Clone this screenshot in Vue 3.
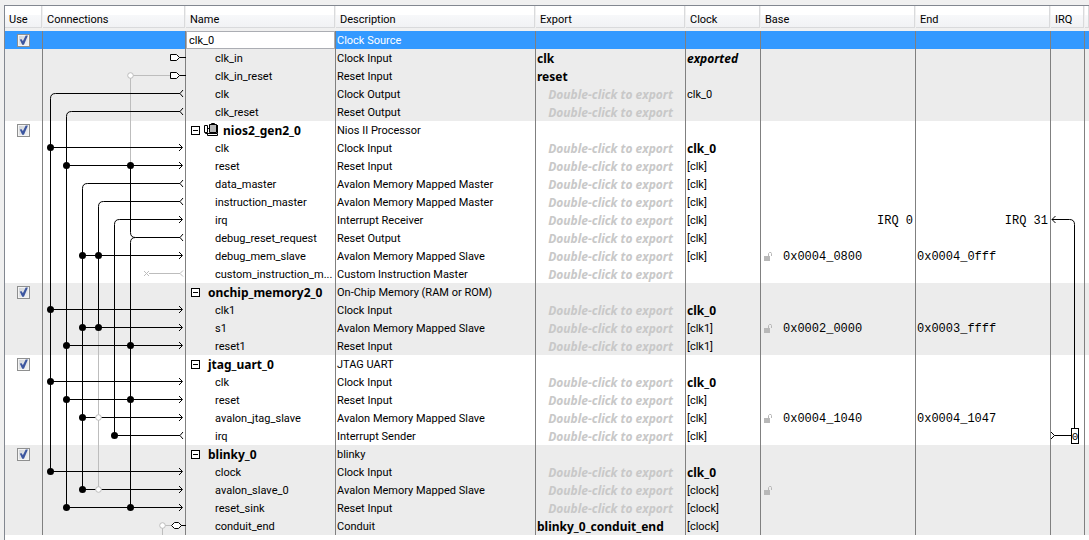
<script setup>
import { ref } from 'vue'

const ROW = 18
const EXPORT_HINT = 'Double-click to export'

const port = (name, description, clock = '', extra = {}) => ({ name, description, clock, hint: true, ...extra })

const modules = ref([
  {
    name: 'clk_0', description: 'Clock Source', enabled: true, selected: true, shaded: true,
    ports: [
      port('clk_in', 'Clock Input', 'exported', { hint: false, exported: 'clk', clockStyle: 'strong slanted' }),
      port('clk_in_reset', 'Reset Input', '', { hint: false, exported: 'reset' }),
      port('clk', 'Clock Output', 'clk_0'),
      port('clk_reset', 'Reset Output'),
    ],
  },
  {
    name: 'nios2_gen2_0', description: 'Nios II Processor', enabled: true, cpu: true,
    ports: [
      port('clk', 'Clock Input', 'clk_0', { clockStyle: 'strong' }),
      port('reset', 'Reset Input', '[clk]'),
      port('data_master', 'Avalon Memory Mapped Master', '[clk]'),
      port('instruction_master', 'Avalon Memory Mapped Master', '[clk]'),
      port('irq', 'Interrupt Receiver', '[clk]', { irqFrom: 'IRQ 0', irqTo: 'IRQ 31' }),
      port('debug_reset_request', 'Reset Output', '[clk]'),
      port('debug_mem_slave', 'Avalon Memory Mapped Slave', '[clk]', { lock: true, base: '0x0004_0800', end: '0x0004_0fff' }),
      port('custom_instruction_m...', 'Custom Instruction Master'),
    ],
  },
  {
    name: 'onchip_memory2_0', description: 'On-Chip Memory (RAM or ROM)', enabled: true, shaded: true,
    ports: [
      port('clk1', 'Clock Input', 'clk_0', { clockStyle: 'strong' }),
      port('s1', 'Avalon Memory Mapped Slave', '[clk1]', { lock: true, base: '0x0002_0000', end: '0x0003_ffff' }),
      port('reset1', 'Reset Input', '[clk1]'),
    ],
  },
  {
    name: 'jtag_uart_0', description: 'JTAG UART', enabled: true,
    ports: [
      port('clk', 'Clock Input', 'clk_0', { clockStyle: 'strong' }),
      port('reset', 'Reset Input', '[clk]'),
      port('avalon_jtag_slave', 'Avalon Memory Mapped Slave', '[clk]', { lock: true, base: '0x0004_1040', end: '0x0004_1047' }),
      port('irq', 'Interrupt Sender', '[clk]'),
    ],
  },
  {
    name: 'blinky_0', description: 'blinky', enabled: true, shaded: true,
    ports: [
      port('clock', 'Clock Input', 'clk_0', { clockStyle: 'strong' }),
      port('avalon_slave_0', 'Avalon Memory Mapped Slave', '[clock]', { lock: true }),
      port('reset_sink', 'Reset Input', '[clock]'),
      port('conduit_end', 'Conduit', '[clock]', { hint: false, exported: 'blinky_0_conduit_end' }),
    ],
  },
])

const headings = ['Use', 'Connections', 'Name', 'Description', 'Export', 'Clock', 'Base', 'End', 'IRQ', '']
const columns = ['use', 'wires', 'name', 'desc', 'export', 'clock', 'base', 'end', 'irq', 'rest']

// Wiring diagram: rows are counted from the first body row, x is inside the Connections column.
const y = (row) => row * ROW + 8.5
const lane = (n) => 7.5 + n * 16

const trunks = [
  `M137 ${y(3)}H12.5Q7.5 ${y(3)} 7.5 ${y(3) + 5}V${y(24)}`,
  `M137 ${y(4)}H28.5Q23.5 ${y(4)} 23.5 ${y(4) + 5}V${y(26)}`,
  `M137 ${y(8)}H44.5Q39.5 ${y(8)} 39.5 ${y(8) + 5}V${y(25)}`,
  `M137 ${y(9)}H60.5Q55.5 ${y(9)} 55.5 ${y(9) + 5}V${y(16)}`,
  `M139 ${y(10)}H76.5Q71.5 ${y(10)} 71.5 ${y(10) + 5}V${y(22)}H137`,
  `M87.5 ${y(7)}V${y(11) - 5}Q87.5 ${y(11)} 92.5 ${y(11)}H137M92.5 ${y(11)}Q87.5 ${y(11)} 87.5 ${y(11) + 5}V${y(26)}`,
]
const branches = [[6, 0], [7, 1], [12, 2], [15, 0], [16, 2], [17, 1], [19, 0], [20, 1], [21, 2], [24, 0], [25, 2], [26, 1]]
const arrows = [...branches.map((b) => b[0]), 10]
const forks = [3, 4, 8, 9, 11, 22]
const joints = [
  [6, 0], [7, 1], [7, 5], [12, 2], [12, 3], [15, 0], [16, 2], [16, 3], [17, 1], [17, 5], [19, 0],
  [20, 1], [20, 5], [21, 2], [22, 4], [24, 0], [25, 2], [26, 1], [26, 5],
]
const openJoints = [[2, 5], [21, 3], [25, 3], [27, 7]]
</script>

<template>
  <main class="page">
    <div class="panel">
      <table class="grid">
        <colgroup>
          <col v-for="c in columns" :key="c" :class="'w-' + c" />
        </colgroup>
        <thead>
          <tr>
            <th v-for="(h, i) in headings" :key="i" scope="col">{{ h }}</th>
          </tr>
        </thead>
        <tbody v-for="m in modules" :key="m.description" :class="{ shaded: m.shaded }">
          <tr :class="{ selected: m.selected }">
            <td class="use"><input v-model="m.enabled" class="tick" type="checkbox" :aria-label="'Use ' + m.name" /></td>
            <td></td>
            <td class="name">
              <input v-if="m.selected" v-model="m.name" class="editor" type="text" aria-label="Name" />
              <div v-else class="module">
                <button class="toggle" type="button" :aria-label="'Collapse ' + m.name"></button>
                <svg v-if="m.cpu" class="cpu" width="15" height="14" viewBox="0 0 15 14" aria-hidden="true">
                  <path d="M.5 2.5h3v7h-3zM4 5.5h1.500M1.500 9.500v1h3" fill="none" stroke="#000" />
                  <path d="M5.500 1.500h7v8h-7z" fill="#b5b5b5" stroke="#000" />
                  <path d="M7.500 1.500v-1h3v1M13.500 2v8M3.500 10.500h10v2h-10z" fill="none" stroke="#000" />
                </svg>
                <strong>{{ m.name }}</strong>
              </div>
            </td>
            <td>{{ m.description }}</td>
            <td></td><td></td><td></td><td></td><td></td><td class="rest"></td>
          </tr>
          <tr v-for="p in m.ports" :key="p.name">
            <td></td>
            <td></td>
            <td class="port">{{ p.name }}</td>
            <td>{{ p.description }}</td>
            <td v-if="p.hint" class="hint">{{ EXPORT_HINT }}</td>
            <td v-else class="strong">{{ p.exported }}</td>
            <td :class="p.clockStyle">{{ p.clock }}</td>
            <td class="mono">
              <span v-if="p.irqFrom" class="right">{{ p.irqFrom }}</span>
              <span v-else-if="p.lock" class="address">
                <svg class="lock" width="9" height="9" viewBox="0 0 9 9" aria-hidden="true">
                  <path d="M0 4h6v5H0z" fill="#b8b8b8" />
                  <path d="M4.500 4V1.500L5.500 .5H7L7.500 1.500V4" fill="none" stroke="#b8b8b8" />
                </svg>
                <span class="base">{{ p.base }}</span>
              </span>
            </td>
            <td class="mono"><span v-if="p.irqTo" class="right">{{ p.irqTo }}</span><template v-else>{{ p.end }}</template></td>
            <td></td>
            <td class="rest"></td>
          </tr>
        </tbody>
      </table>

      <svg class="wiring" width="143" height="504" viewBox="0 0 143 504" fill="none" stroke="#000" aria-hidden="true">
        <g stroke="#bdbdbd">
          <path :d="`M127 ${y(2)}H87.5V${y(7)}M55.5 ${y(16)}V${y(25)}M119.500 ${y(27)}V504M119.500 ${y(27)}H128M106 ${y(13)}H137`" />
          <path :d="`M101 ${y(13) - 2.5}l5 5m0 -5l-5 5M140 ${y(13) - 3}l-3 3l3 3`" />
        </g>
        <path v-for="d in trunks" :key="d" :d="d" />
        <path v-for="[r, n] in branches" :key="'b' + r" :d="`M${lane(n)} ${y(r)}H139`" />
        <path v-for="r in arrows" :key="'a' + r" :d="`M136 ${y(r) - 3.5}l3.500 3.500l-3.500 3.500`" />
        <path v-for="r in forks" :key="'f' + r" :d="`M140 ${y(r) - 3.5}l-3 3.500l3 3.500`" />
        <circle v-for="[r, n] in joints" :key="'j' + r + n" :cx="lane(n)" :cy="y(r)" r="3.500" fill="#000" stroke="none" />
        <circle v-for="[r, n] in openJoints" :key="'o' + r + n" :cx="lane(n)" :cy="y(r)" r="2.800" fill="#fff" stroke="#bdbdbd" />
        <path v-for="r in [1, 2]" :key="'p' + r" :d="`M127.500 ${y(r) - 3}h6l3 3l-3 3h-6zM136.500 ${y(r)}H143`" fill="#fff" />
        <path :d="`M138 ${y(27)}H143M128.500 ${y(27)}l3 -3h4l3 3l-3 3h-4z`" fill="#fff" />
      </svg>

      <svg class="irq-wire" width="33" height="504" viewBox="0 0 33 504" fill="none" stroke="#000" aria-hidden="true">
        <path :d="`M1 ${y(10)}H18.500Q23.500 ${y(10)} 23.500 ${y(10) + 5}V397M4.500 ${y(10) - 3.5}l-3.500 3.500l3.500 3.500`" />
        <path :d="`M0 ${y(22) - 3.5}l3.500 3.500l-3.500 3.500M3.500 ${y(22)}H20`" />
        <rect x="20.5" y="397.5" width="7" height="15" fill="#fff" />
        <text class="irq-number" x="24" y="409" text-anchor="middle">0</text>
      </svg>
    </div>
  </main>
</template>

<style>
body {
  margin: 0;
  background: #f0f0f0;
}
</style>

<style scoped>
.page {
  box-sizing: border-box;
  min-height: 100vh;
  padding: 5px 0 0 4px;
  display: flex;
  background: #f0f0f0;
  color: #000;
  font: 11px/16px Roboto, "Noto Sans", sans-serif;
}
.panel {
  position: relative;
  flex: 1;
  min-width: 0;
  border-top: 1px solid #828790;
  border-left: 1px solid #828790;
  background: #fff;
}
.grid {
  width: 100%;
  table-layout: fixed;
  border-collapse: separate;
  border-spacing: 0;
}
.w-use { width: 38px; }
.w-wires { width: 143px; }
.w-name { width: 150px; }
.w-desc { width: 200px; }
.w-export { width: 150px; }
.w-clock { width: 75px; }
.w-base { width: 155px; }
.w-end { width: 135px; }
.w-irq { width: 34px; }
th {
  box-sizing: border-box;
  height: 25px;
  padding: 6px 0 0 4px;
  border-right: 1px solid #f0f0f0;
  border-bottom: 3px solid #f0f0f0;
  background: linear-gradient(#fff 9px, #f7f8fa 9px, #f1f2f4);
  box-shadow: inset -1px -1px 0 #d9dadc;
  line-height: 16px;
  font-weight: 400;
  text-align: left;
  color: #000;
}
th:last-child { border-right: 0; }
td {
  box-sizing: border-box;
  height: 18px;
  padding: 2px 1px 0;
  border-right: 1px solid #808080;
  white-space: nowrap;
  overflow: hidden;
}
td.rest { border-right: 0; }
.shaded td { background: #ececec; }
.selected td {
  background: #3399ff;
  color: #fff;
}
td.use {
  padding: 0;
  text-align: center;
}
td.name { padding: 0; }
td.port { padding-left: 29px; }
.hint,
.strong,
.module strong {
  font-family: "Noto Sans", "Open Sans", sans-serif;
  font-size: 12px;
  font-weight: 700;
}
td.hint {
  color: #c8c8c8;
  font-style: italic;
  text-align: center;
}
.slanted { font-style: italic; }
.tick {
  appearance: none;
  display: block;
  box-sizing: border-box;
  width: 13px;
  height: 13px;
  margin: 0 auto;
  border: 1px solid #8e8f8f;
  background: linear-gradient(135deg, #cdd1d6, #f6f6f6);
  box-shadow: inset 0 0 0 1px #f4f4f4;
}
.tick:checked::before {
  content: "";
  display: block;
  width: 11px;
  height: 11px;
  background: #3c56a0;
  clip-path: polygon(16% 46%, 34% 43%, 44% 62%, 70% 8%, 90% 8%, 54% 94%, 38% 94%);
}
.editor {
  display: block;
  box-sizing: border-box;
  width: 100%;
  height: 18px;
  margin: 0;
  padding: 0 2px;
  border: 1px solid #abadb3;
  border-radius: 0;
  outline: 0;
  background: #fff;
  color: #000;
  font: inherit;
  line-height: 16px;
}
.module {
  display: flex;
  align-items: center;
  height: 18px;
  padding-left: 5px;
}
.toggle {
  box-sizing: border-box;
  width: 9px;
  height: 9px;
  padding: 0;
  border: 1px solid #000;
  border-radius: 0;
  background: linear-gradient(#000, #000) center / 5px 1px no-repeat #fff;
}
.module strong {
  margin-left: 8px;
  padding-top: 2px;
}
.cpu { margin-left: 4px; }
.cpu + strong { margin-left: 4px; }
.mono {
  font-family: "Liberation Mono", monospace;
  font-size: 12px;
}
.right {
  display: block;
  padding-right: 1px;
  text-align: right;
}
.address {
  display: flex;
  align-items: center;
  height: 16px;
}
.lock {
  margin-left: 2px;
  margin-bottom: 2px;
}
.base {
  margin-left: 10px;
}
.wiring,
.irq-wire {
  position: absolute;
  top: 25px;
  pointer-events: none;
}
.wiring { left: 38px; }
.irq-wire { left: 1046px; }
.irq-number {
  fill: #000;
  stroke: none;
  font: 11px "Liberation Mono", monospace;
}
</style>
